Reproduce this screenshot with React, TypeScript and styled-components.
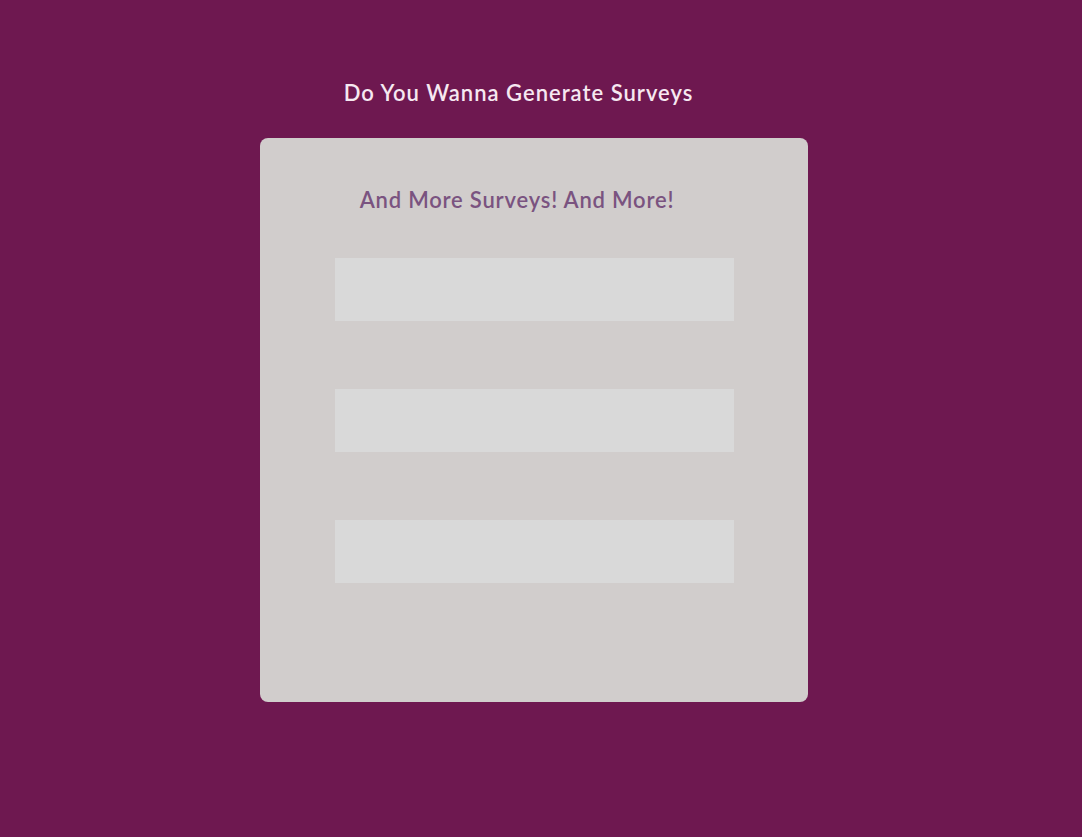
import styled, { createGlobalStyle } from 'styled-components';

const GlobalStyle = createGlobalStyle`
  body {
    margin: 0;
    background-color: #6e1850;
    font-family: Lato, "Open Sans", sans-serif;
  }
`;

const Page = styled.main`
  min-height: 837px;
  padding: 79px 0 0 260px;
  box-sizing: border-box;
`;

const Column = styled.div`
  width: 548px;
  display: flex;
  flex-direction: column;
`;

const Title = styled.h1`
  margin: 0 0 31px;
  padding-right: 31px;
  text-align: center;
  font-size: 22px;
  font-weight: 600;
  letter-spacing: 1px;
  line-height: 28px;
  color: #f6e8f1;
`;

const Card = styled.section`
  height: 564px;
  box-sizing: border-box;
  background-color: #d1cdcc;
  border-radius: 8px;
  padding: 48px 0 0;
  display: flex;
  flex-direction: column;
  align-items: center;
`;

const Subtitle = styled.h2`
  align-self: stretch;
  margin: 0 0 44px;
  padding-right: 34px;
  text-align: center;
  font-size: 22px;
  font-weight: 600;
  letter-spacing: 0.8px;
  line-height: 28px;
  color: #7a5380;
`;

const Fields = styled.form`
  display: flex;
  flex-direction: column;
  gap: 68px;
`;

const Field = styled.input`
  width: 399px;
  height: 63px;
  box-sizing: border-box;
  border: none;
  background-color: #d9d9d9;
  outline: none;
  font-family: inherit;
`;

export default function App() {
  return (
    <>
      <GlobalStyle />
      <Page>
        <Column>
          <Title>Do You Wanna Generate Surveys</Title>
          <Card>
            <Subtitle>And More Surveys! And More!</Subtitle>
            <Fields>
              <Field type="text" />
              <Field type="text" />
              <Field type="text" />
            </Fields>
          </Card>
        </Column>
      </Page>
    </>
  );
}
